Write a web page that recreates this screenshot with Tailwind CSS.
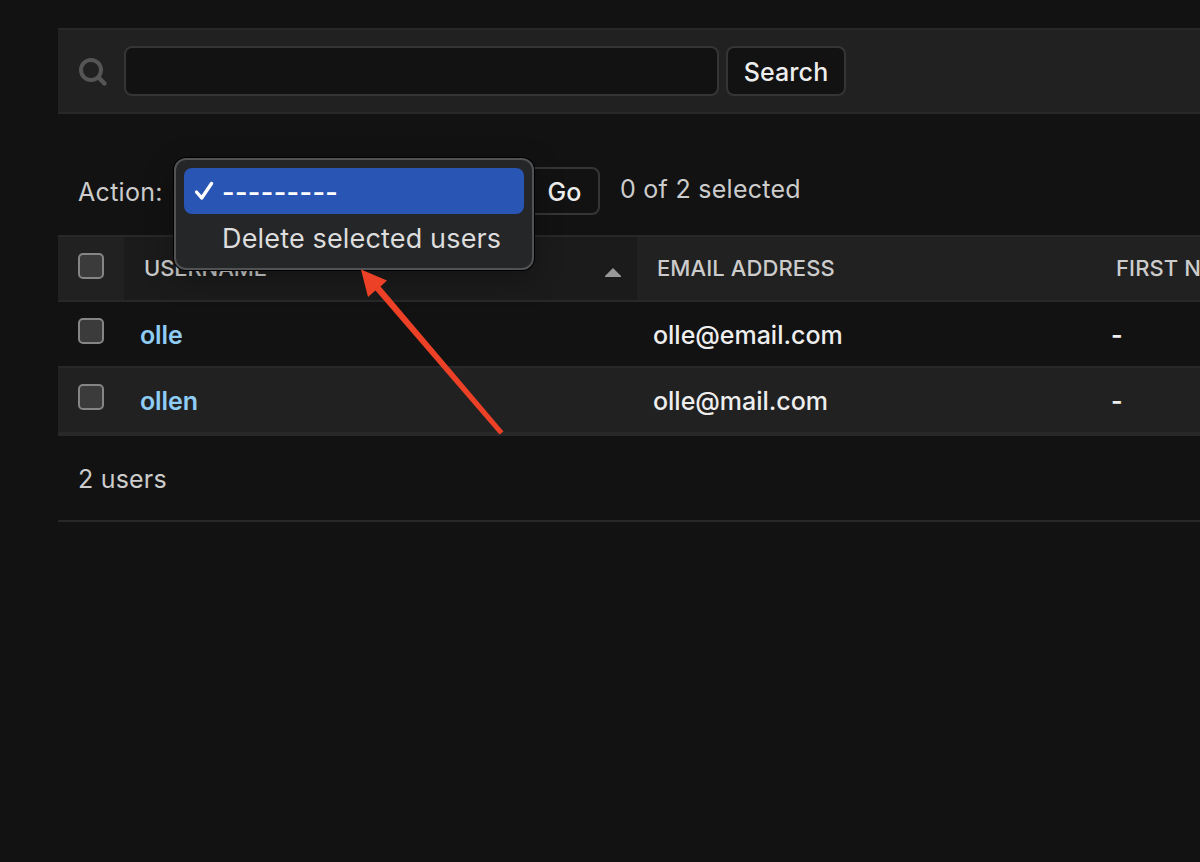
<!DOCTYPE html>
<html lang="en">
<head>
<meta charset="utf-8">
<title>Users</title>
<script src="https://cdn.jsdelivr.net/npm/@tailwindcss/browser@4"></script>
</head>
<body class="h-[862px] overflow-hidden bg-[#121212] pt-7 pl-[58px] font-['Inter',sans-serif] text-[25px] leading-8 font-normal tracking-[0.12px] whitespace-nowrap text-[#cccccc]">
<main class="relative">
  <form class="flex h-[86px] items-center border-y-2 border-[#282828] bg-[#212121] pl-5">
    <svg class="mt-px mr-4 h-[30px] w-[30px]" viewBox="0 0 30 30" fill="none" stroke="#555555"><circle cx="13" cy="13" r="10" stroke-width="4"/><path d="M20.5 20.5 L26.5 26.5" stroke-width="4.4" stroke-linecap="round"/></svg>
    <div class="h-[50px] w-[595px] rounded-lg border-2 border-[#353535] bg-[#121212]"></div>
    <button type="button" class="ml-[7px] h-[50px] w-[120px] rounded-lg border-2 border-[#353535] bg-[#121212] pt-0.5 font-[450] text-[#eeeeee]">Search</button>
  </form>

  <div class="flex h-[121px] pl-5">
    <div class="mt-[62px] w-[376px] tracking-[0.3px]">Action:</div>
    <button type="button" class="mt-[53px] h-12 w-[146px] rounded-lg border-2 border-[#353535] pt-px pl-[91.5px] text-left leading-[44px] font-[450] text-[#eeeeee]">Go</button>
    <div class="mt-[59px] ml-5 tracking-[0.27px]">0 of 2 selected</div>
  </div>

  <div class="grid grid-cols-[66px_513px_459px_1fr] overflow-hidden">
    <div class="col-span-4 grid h-[67px] grid-cols-subgrid border-y-2 border-[#282828] bg-[#212121] text-[22px] font-[450]">
      <div class="pt-4 pl-5"><div class="h-[26px] w-[26px] rounded-[5px] border-2 border-[#858585] bg-[#3b3b3b]"></div></div>
      <div class="flex justify-between bg-[#1b1b1b] pt-[15px] pr-4 pl-5">
        <span class="tracking-[-0.1px]">USERNAME</span>
        <svg class="mt-[16px] h-[9px] w-4" viewBox="0 0 16 9"><path d="M8 0 L16 8 V9 H0 V8 Z" fill="#999999"/></svg>
      </div>
      <div class="pt-[15px] pl-5 tracking-[0.1px]">EMAIL ADDRESS</div>
      <div class="pt-[15px] pl-5 tracking-[0.1px]">FIRST NAME</div>
    </div>
    <div class="col-span-4 grid h-16 grid-cols-subgrid font-[450] text-[#eeeeee]">
      <div class="pt-4 pl-5"><div class="h-[26px] w-[26px] rounded-[5px] border-2 border-[#858585] bg-[#3b3b3b]"></div></div>
      <div class="pt-[17px] pl-4 font-semibold tracking-[-0.1px] text-[#8fcdf5]">olle</div>
      <div class="pt-[17px] pl-4 tracking-[-0.02px]">olle@email.com</div>
      <div class="pt-[17px] pl-[15px] font-semibold">-</div>
    </div>
    <div class="col-span-4 grid h-[70px] grid-cols-subgrid border-t-2 border-b-4 border-[#282828] bg-[#212121] font-[450] text-[#eeeeee]">
      <div class="pt-4 pl-5"><div class="h-[26px] w-[26px] rounded-[5px] border-2 border-[#858585] bg-[#3b3b3b]"></div></div>
      <div class="pt-[17px] pl-4 font-semibold tracking-[-0.1px] text-[#8fcdf5]">ollen</div>
      <div class="pt-[17px] pl-4 tracking-[-0.02px]">olle@mail.com</div>
      <div class="pt-[17px] pl-[15px] font-semibold">-</div>
    </div>
  </div>
  <div class="h-[86px] border-b-2 border-[#282828] pt-[27px] pl-5 tracking-[0.2px]">2 users</div>

  <div class="absolute top-[130px] left-[116px] h-[112px] w-[360px] rounded-xl border-2 border-[#505254] bg-[#252628] p-2 text-[27px] text-[#dddddd] shadow-[0_0_0_1px_#000,0_8px_30px_rgba(0,0,0,0.3)]">
    <div class="flex h-[46px] items-center rounded-lg bg-[#2955b5] pl-[10px] text-white">
      <svg class="mr-2 h-5 w-5" viewBox="0 0 20 20" fill="none" stroke="#ffffff" stroke-width="3.4" stroke-linecap="round" stroke-linejoin="round"><path d="M2.5 11 L7.7 17 L17.5 2.5"/></svg>
      <span class="pt-[3px] font-semibold tracking-[0.35px]">---------</span>
    </div>
    <div class="pt-[9px] pl-[38px] leading-8 tracking-[0.16px]">Delete selected users</div>
  </div>

  <svg class="absolute top-[240px] left-[300px] h-[170px] w-[150px]" viewBox="358 268 150 170" fill="#ec4126"><path d="M361 269.5 L387 280.5 L380.5 286.5 L503.5 431.5 L499.5 434.5 L375.5 290.5 L368 297 Z"/></svg>
</main>
</body>
</html>
